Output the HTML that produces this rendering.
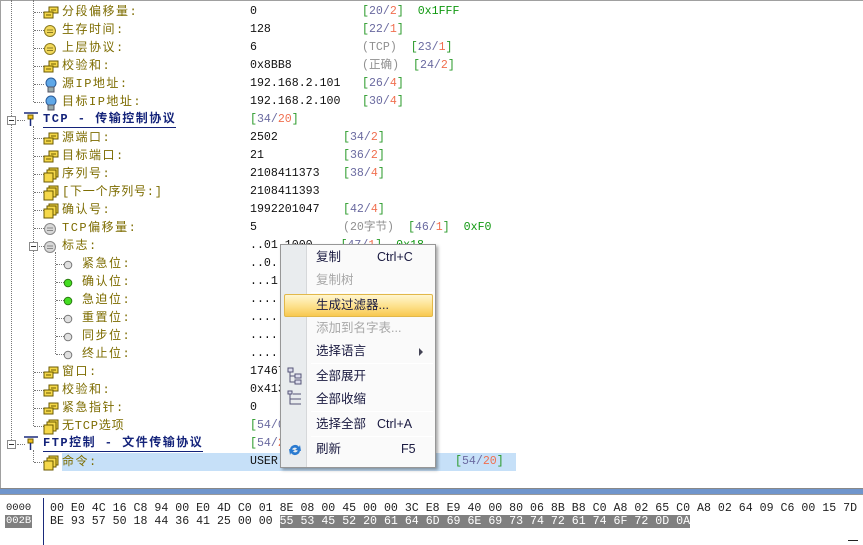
<!DOCTYPE html>
<html><head><meta charset="utf-8"><style>
*{margin:0;padding:0;box-sizing:border-box}
body{width:863px;height:545px;overflow:hidden;background:#fff;position:relative;font-family:"Liberation Mono","Noto Sans CJK SC",monospace}
.top{position:absolute;left:0;top:0;width:863px;height:1px;background:#a0a0a0}
.lft{position:absolute;left:0;top:0;width:1px;height:488px;background:#a0a0a0}
.r{position:absolute;left:0;height:18px;width:863px}
.lb{position:absolute;top:1px;font-family:"Liberation Mono","Noto Sans CJK SC",monospace;font-size:12px;color:#7d6c00;letter-spacing:1.5px;white-space:nowrap;line-height:16px}
.v{position:absolute;top:1px;font-size:11.6px;color:#111;white-space:nowrap;line-height:16px}
.g{color:#2a9a2a}.p{color:#6a6aa0}.o{color:#f07050}.gr{color:#909090}.gg{color:#119911}
.ic{position:absolute;top:2px;width:16px;height:16px}
.hl{position:absolute;top:0;height:18px;background:#c6e0f8}
.vl{position:absolute;border-left:1px dotted #777;width:0}
.hd{position:absolute;border-top:1px dotted #777;height:0}
.box{position:absolute;width:9px;height:9px;border:1px solid #8a8a8a;background:#fff}
.box:after{content:"";position:absolute;left:1px;top:3px;width:5px;height:1px;background:#333}
.hdr{position:absolute;top:1px;font-size:12px;color:#14237a;font-weight:bold;border-bottom:1px solid #14237a;line-height:15px;white-space:pre;letter-spacing:1.5px}
.menu{position:absolute;left:280px;top:244px;width:156px;height:224px;background:#fafafa;border:1px solid #979797;box-shadow:2px 2px 3px rgba(0,0,0,.35);font-family:"Liberation Sans","Noto Sans CJK SC",sans-serif;font-size:12.5px;color:#1a1a40}
.mcol{position:absolute;left:0;top:0;width:26px;height:100%;background:#e9ecee;border-right:1px solid #d6d8da}
.mi,.sc{position:absolute;white-space:nowrap;line-height:17px;height:17px}
.mi{left:35px}
.sc{left:96px}
.sep{position:absolute;left:30px;width:122px;height:1px;background:#c8c8c8;border-bottom:1px solid #fff}
.dis{color:#a8a8a8}
.split{position:absolute;left:0;top:488px;width:863px;height:7px;background:#6f95cc;border-top:1px solid #888;border-bottom:1px solid #999}
.hex{position:absolute;font-family:"Liberation Mono",monospace;font-size:11.6px;color:#222;white-space:pre;line-height:13px}
</style></head><body>
<svg width="0" height="0" style="position:absolute">
<defs>
<symbol id="f2" viewBox="0 0 16 16"><rect x="6" y="2" width="9" height="6" fill="#f5d84a" stroke="#6b5a00"/><line x1="8" y1="5" x2="13" y2="5" stroke="#6b5a00"/><rect x="1" y="7" width="9" height="6" fill="#f5d84a" stroke="#6b5a00"/><line x1="3" y1="10" x2="8" y2="10" stroke="#6b5a00"/></symbol>
<symbol id="s3" viewBox="0 0 16 16"><rect x="6" y="1" width="9" height="9" fill="#f5d84a" stroke="#6b5a00"/><rect x="4" y="3" width="9" height="9" fill="#f5d84a" stroke="#6b5a00"/><rect x="1" y="6" width="9" height="9" fill="#f5d84a" stroke="#6b5a00"/></symbol>
<symbol id="cy" viewBox="0 0 16 16"><circle cx="8" cy="8" r="5.5" fill="#f2d85a" stroke="#8a7a20"/><line x1="5" y1="7" x2="11" y2="7" stroke="#8a7a20"/><line x1="5" y1="9.5" x2="11" y2="9.5" stroke="#8a7a20"/></symbol>
<symbol id="cg" viewBox="0 0 16 16"><circle cx="8" cy="8" r="5.5" fill="#d8d8d8" stroke="#888"/><line x1="5" y1="7" x2="11" y2="7" stroke="#888"/><line x1="5" y1="9.5" x2="11" y2="9.5" stroke="#888"/></symbol>
<symbol id="dg" viewBox="0 0 16 16"><circle cx="8" cy="8" r="3.8" fill="#e0e0e0" stroke="#777"/></symbol>
<symbol id="dn" viewBox="0 0 16 16"><circle cx="8" cy="8" r="3.8" fill="#44dd22" stroke="#2a7a10"/></symbol>
<symbol id="pc" viewBox="0 0 16 16"><ellipse cx="8" cy="6" rx="5" ry="5" fill="#5fa8e8" stroke="#2a5c9a"/><rect x="5" y="10" width="6" height="5" fill="#9aa" stroke="#556"/></symbol>
<symbol id="tp" viewBox="0 0 16 16"><line x1="1" y1="2" x2="15" y2="2" stroke="#1a2a7a" stroke-width="1.5"/><rect x="5" y="4" width="5" height="4" fill="#f0c020" stroke="#6b5a00"/><line x1="7.5" y1="8" x2="7.5" y2="15" stroke="#1a2a7a" stroke-width="1.5"/></symbol>
</defs></svg>
<div class="top"></div><div class="lft"></div>
<div class="vl" style="left:11px;top:0;height:444px"></div>
<div class="vl" style="left:33px;top:0;height:102px"></div>
<div class="vl" style="left:33px;top:126px;height:300px"></div>
<div class="vl" style="left:55px;top:252px;height:102px"></div>
<div class="vl" style="left:33px;top:450px;height:12px"></div>

<div class="r" style="top:3px"><div class="hd" style="left:34px;top:9px;width:10px"></div><svg class="ic" style="left:43px"><use href="#f2"/></svg><span class="lb" style="left:62px">分段偏移量:</span><span class="v" style="left:250px">0</span><span class="v" style="left:362px"><span class="g">[</span><span class="p">20/</span><span class="o">2</span><span class="g">]</span>&nbsp;&nbsp;<span class="gg">0x1FFF</span></span></div>
<div class="r" style="top:21px"><div class="hd" style="left:34px;top:9px;width:10px"></div><svg class="ic" style="left:42px"><use href="#cy"/></svg><span class="lb" style="left:62px">生存时间:</span><span class="v" style="left:250px">128</span><span class="v" style="left:362px"><span class="g">[</span><span class="p">22/</span><span class="o">1</span><span class="g">]</span></span></div>
<div class="r" style="top:39px"><div class="hd" style="left:34px;top:9px;width:10px"></div><svg class="ic" style="left:42px"><use href="#cy"/></svg><span class="lb" style="left:62px">上层协议:</span><span class="v" style="left:250px">6</span><span class="v" style="left:362px"><span class="gr">(TCP)</span>&nbsp;&nbsp;<span class="g">[</span><span class="p">23/</span><span class="o">1</span><span class="g">]</span></span></div>
<div class="r" style="top:57px"><div class="hd" style="left:34px;top:9px;width:10px"></div><svg class="ic" style="left:43px"><use href="#f2"/></svg><span class="lb" style="left:62px">校验和:</span><span class="v" style="left:250px">0x8BB8</span><span class="v" style="left:362px"><span class="gr">(正确)</span>&nbsp;&nbsp;<span class="g">[</span><span class="p">24/</span><span class="o">2</span><span class="g">]</span></span></div>
<div class="r" style="top:75px"><div class="hd" style="left:34px;top:9px;width:10px"></div><svg class="ic" style="left:43px"><use href="#pc"/></svg><span class="lb" style="left:62px">源IP地址:</span><span class="v" style="left:250px">192.168.2.101</span><span class="v" style="left:362px"><span class="g">[</span><span class="p">26/</span><span class="o">4</span><span class="g">]</span></span></div>
<div class="r" style="top:93px"><div class="hd" style="left:34px;top:9px;width:10px"></div><svg class="ic" style="left:43px"><use href="#pc"/></svg><span class="lb" style="left:62px">目标IP地址:</span><span class="v" style="left:250px">192.168.2.100</span><span class="v" style="left:362px"><span class="g">[</span><span class="p">30/</span><span class="o">4</span><span class="g">]</span></span></div>
<div class="r" style="top:111px"><div class="box" style="left:7px;top:5px"></div><div class="hd" style="left:17px;top:9px;width:8px"></div><svg class="ic" style="left:23px;top:0"><use href="#tp"/></svg><span class="hdr" style="left:43px">TCP - 传输控制协议</span><span class="v" style="left:250px"><span class="g">[</span><span class="p">34/</span><span class="o">20</span><span class="g">]</span></span></div>
<div class="r" style="top:129px"><div class="hd" style="left:34px;top:9px;width:10px"></div><svg class="ic" style="left:43px"><use href="#f2"/></svg><span class="lb" style="left:62px">源端口:</span><span class="v" style="left:250px">2502</span><span class="v" style="left:343px"><span class="g">[</span><span class="p">34/</span><span class="o">2</span><span class="g">]</span></span></div>
<div class="r" style="top:147px"><div class="hd" style="left:34px;top:9px;width:10px"></div><svg class="ic" style="left:43px"><use href="#f2"/></svg><span class="lb" style="left:62px">目标端口:</span><span class="v" style="left:250px">21</span><span class="v" style="left:343px"><span class="g">[</span><span class="p">36/</span><span class="o">2</span><span class="g">]</span></span></div>
<div class="r" style="top:165px"><div class="hd" style="left:34px;top:9px;width:10px"></div><svg class="ic" style="left:43px"><use href="#s3"/></svg><span class="lb" style="left:62px">序列号:</span><span class="v" style="left:250px">2108411373</span><span class="v" style="left:343px"><span class="g">[</span><span class="p">38/</span><span class="o">4</span><span class="g">]</span></span></div>
<div class="r" style="top:183px"><div class="hd" style="left:34px;top:9px;width:10px"></div><svg class="ic" style="left:43px"><use href="#s3"/></svg><span class="lb" style="left:62px;letter-spacing:0.8px">[下一个序列号:]</span><span class="v" style="left:250px">2108411393</span></div>
<div class="r" style="top:201px"><div class="hd" style="left:34px;top:9px;width:10px"></div><svg class="ic" style="left:43px"><use href="#s3"/></svg><span class="lb" style="left:62px">确认号:</span><span class="v" style="left:250px">1992201047</span><span class="v" style="left:343px"><span class="g">[</span><span class="p">42/</span><span class="o">4</span><span class="g">]</span></span></div>
<div class="r" style="top:219px"><div class="hd" style="left:34px;top:9px;width:10px"></div><svg class="ic" style="left:42px"><use href="#cg"/></svg><span class="lb" style="left:62px">TCP偏移量:</span><span class="v" style="left:250px">5</span><span class="v" style="left:343px"><span class="gr">(20字节)</span>&nbsp;&nbsp;<span class="g">[</span><span class="p">46/</span><span class="o">1</span><span class="g">]</span>&nbsp;&nbsp;<span class="gg">0xF0</span></span></div>
<div class="r" style="top:237px"><div class="box" style="left:29px;top:5px"></div><div class="hd" style="left:39px;top:9px;width:5px"></div><svg class="ic" style="left:42px"><use href="#cg"/></svg><span class="lb" style="left:62px">标志:</span><span class="v" style="left:250px">..01 1000&nbsp;&nbsp;&nbsp;&nbsp;<span class="g">[</span><span class="p">47/</span><span class="o">1</span><span class="g">]</span>&nbsp;&nbsp;<span class="gg">0x18</span></span></div>
<div class="r" style="top:255px"><div class="hd" style="left:56px;top:9px;width:8px"></div><svg class="ic" style="left:60px"><use href="#dg"/></svg><span class="lb" style="left:82px">紧急位:</span><span class="v" style="left:250px">..0. ....</span></div>
<div class="r" style="top:273px"><div class="hd" style="left:56px;top:9px;width:8px"></div><svg class="ic" style="left:60px"><use href="#dn"/></svg><span class="lb" style="left:82px">确认位:</span><span class="v" style="left:250px">...1 ....</span></div>
<div class="r" style="top:291px"><div class="hd" style="left:56px;top:9px;width:8px"></div><svg class="ic" style="left:60px"><use href="#dn"/></svg><span class="lb" style="left:82px">急迫位:</span><span class="v" style="left:250px">.... 1...</span></div>
<div class="r" style="top:309px"><div class="hd" style="left:56px;top:9px;width:8px"></div><svg class="ic" style="left:60px"><use href="#dg"/></svg><span class="lb" style="left:82px">重置位:</span><span class="v" style="left:250px">.... .0..</span></div>
<div class="r" style="top:327px"><div class="hd" style="left:56px;top:9px;width:8px"></div><svg class="ic" style="left:60px"><use href="#dg"/></svg><span class="lb" style="left:82px">同步位:</span><span class="v" style="left:250px">.... ..0.</span></div>
<div class="r" style="top:345px"><div class="hd" style="left:56px;top:9px;width:8px"></div><svg class="ic" style="left:60px"><use href="#dg"/></svg><span class="lb" style="left:82px">终止位:</span><span class="v" style="left:250px">.... ...0</span></div>
<div class="r" style="top:363px"><div class="hd" style="left:34px;top:9px;width:10px"></div><svg class="ic" style="left:43px"><use href="#f2"/></svg><span class="lb" style="left:62px">窗口:</span><span class="v" style="left:250px">17467</span></div>
<div class="r" style="top:381px"><div class="hd" style="left:34px;top:9px;width:10px"></div><svg class="ic" style="left:43px"><use href="#f2"/></svg><span class="lb" style="left:62px">校验和:</span><span class="v" style="left:250px">0x4136</span><span class="v" style="left:430px"><span class="g">]</span></span></div>
<div class="r" style="top:399px"><div class="hd" style="left:34px;top:9px;width:10px"></div><svg class="ic" style="left:43px"><use href="#f2"/></svg><span class="lb" style="left:62px">紧急指针:</span><span class="v" style="left:250px">0</span></div>
<div class="r" style="top:417px"><div class="hd" style="left:34px;top:9px;width:10px"></div><svg class="ic" style="left:43px"><use href="#s3"/></svg><span class="lb" style="left:62px;letter-spacing:0.8px">无TCP选项</span><span class="v" style="left:250px"><span class="g">[</span><span class="p">54/0</span><span class="g">]</span></span></div>
<div class="r" style="top:435px"><div class="box" style="left:7px;top:5px"></div><div class="hd" style="left:17px;top:9px;width:8px"></div><svg class="ic" style="left:23px;top:0"><use href="#tp"/></svg><span class="hdr" style="left:43px">FTP控制 - 文件传输协议</span><span class="v" style="left:250px"><span class="g">[</span><span class="p">54/</span><span class="o">20</span><span class="g">]</span></span></div>
<div class="r" style="top:453px"><div class="hl" style="left:62px;width:454px"></div><div class="hd" style="left:34px;top:9px;width:10px"></div><svg class="ic" style="left:43px"><use href="#s3"/></svg><span class="lb" style="left:62px">命令:</span><span class="v" style="left:250px">USER administrator&lt;CR&gt;&lt;LF&gt;</span><span class="v" style="left:455px"><span class="g">[</span><span class="p">54/</span><span class="o">20</span><span class="g">]</span></span></div>

<div class="menu">
<div class="mcol"></div>
<div style="position:absolute;left:3px;top:49px;width:149px;height:23px;border:1px solid #e2b84a;border-radius:2px;background:linear-gradient(#fff6d0,#fde08a 55%,#f8c850)"></div>
<span class="mi" style="top:4px">复制</span><span class="sc" style="top:4px">Ctrl+C</span>
<span class="mi dis" style="top:27px">复制树</span>
<div class="sep" style="top:47px"></div>
<span class="mi" style="top:52px">生成过滤器...</span>
<span class="mi dis" style="top:75px">添加到名字表...</span>
<span class="mi" style="top:98px">选择语言</span><span style="position:absolute;left:138px;top:103px;width:0;height:0;border-left:4px solid #445;border-top:4px solid transparent;border-bottom:4px solid transparent"></span>
<div class="sep" style="top:118px"></div>
<svg style="position:absolute;left:6px;top:122px" width="16" height="18"><rect x="1" y="1" width="5" height="4" fill="#dde" stroke="#557"/><rect x="8" y="7" width="6" height="4" fill="#dde" stroke="#557"/><rect x="8" y="13" width="6" height="4" fill="#dde" stroke="#557"/><path d="M3 5V15H8M3 9H8" stroke="#557" fill="none"/></svg>
<span class="mi" style="top:123px">全部展开</span>
<svg style="position:absolute;left:6px;top:145px" width="16" height="18"><rect x="1" y="1" width="4" height="3" fill="#dde" stroke="#557"/><path d="M3 4V14H6M3 9H6M6 4H14M6 9H14M6 14H14" stroke="#557" fill="none"/></svg>
<span class="mi" style="top:146px">全部收缩</span>
<div class="sep" style="top:166px"></div>
<span class="mi" style="top:171px">选择全部</span><span class="sc" style="top:171px">Ctrl+A</span>
<div class="sep" style="top:191px"></div>
<svg style="position:absolute;left:6px;top:197px" width="16" height="16"><path d="M3 8A5 5 0 0 1 12 5L13 3L14 9L8 8L10 6.5A3 3 0 0 0 5 8Z" fill="#2a7ad0"/><path d="M13 8A5 5 0 0 1 4 11L3 13L2 7L8 8L6 9.5A3 3 0 0 0 11 8Z" fill="#2a7ad0"/></svg>
<span class="mi" style="top:196px">刷新</span><span class="sc" style="top:196px;left:120px">F5</span>
</div>

<div class="split"></div>
<div class="hex" style="left:6px;top:502px;font-size:10.5px">0000</div>
<div class="hex" style="left:5px;top:515px;background:#808080;color:#fff;padding:0 1px;font-size:10.5px">002B</div>
<div style="position:absolute;left:43px;top:498px;width:1px;height:47px;background:#1a2a7a"></div>
<div class="hex" style="left:50px;top:502px">00 E0 4C 16 C8 94 00 E0 4D C0 01 8E 08 00 45 00 00 3C E8 E9 40 00 80 06 8B B8 C0 A8 02 65 C0 A8 02 64 09 C6 00 15 7D</div>
<div class="hex" style="left:50px;top:515px">BE 93 57 50 18 44 36 41 25 00 00 <span style="background:#808080;color:#fff">55 53 45 52 20 61 64 6D 69 6E 69 73 74 72 61 74 6F 72 0D 0A</span></div>
<div style="position:absolute;left:848px;top:540px;width:10px;height:1px;background:#222"></div>
</body></html>
